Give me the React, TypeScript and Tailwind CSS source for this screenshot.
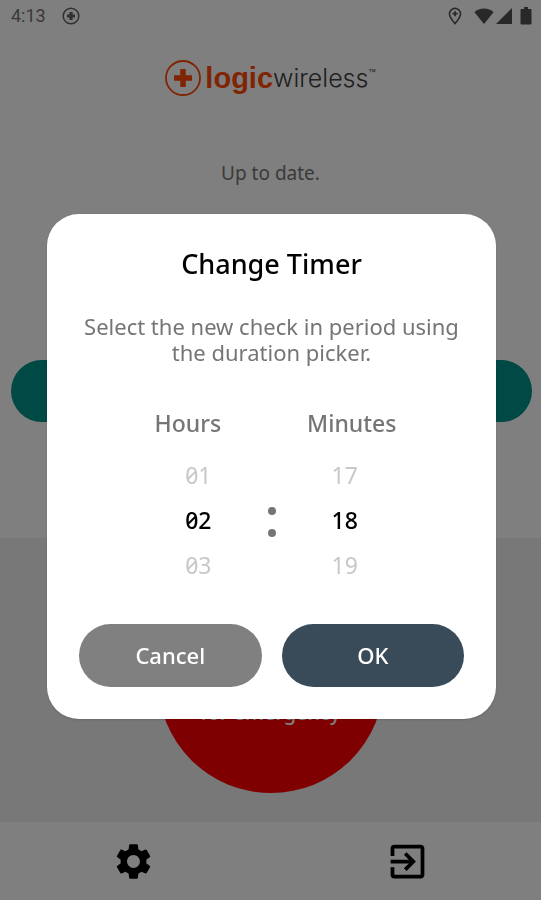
import { useState } from "react";
import { MdExitToApp, MdSettings } from "react-icons/md";

const pad = (n: number) => String(n).padStart(2, "0");

function StatusBar() {
  return (
    <div className="flex h-8 items-center justify-between pr-[9px] pl-[11px] text-[#757575]">
      <div className="flex items-center gap-4">
        <span className="font-['Roboto',sans-serif] text-[18px] leading-6">4:13</span>
        <svg viewBox="0 0 18 18" className="size-[18px]" fill="none" stroke="#606060" aria-hidden="true">
          <circle cx="9" cy="9" r="7.8" strokeWidth="1.5" />
          <path d="M9 5v8M5 9h8" strokeWidth="3.2" />
        </svg>
      </div>
      <div className="flex items-center text-[#505050]">
        <svg viewBox="0 0 14 18" className="mr-3 h-[18px] w-[14px]" fill="none" stroke="currentColor" aria-hidden="true">
          <path d="M7 16.6C4 12.800 1.500 10 1.500 6.900a5.500 5.500 0 0 1 11 0C12.500 10 10 12.800 7 16.600z" strokeWidth="1.6" />
          <path d="M7 4.200v5M4.500 6.700h5" strokeWidth="1.700" />
        </svg>
        <svg viewBox="0 0 20 16" className="h-4 w-5" fill="currentColor" aria-hidden="true">
          <path d="M10 16 .500 4.200C3 1.800 6.300.500 10 .500s7 1.300 9.500 3.700z" />
        </svg>
        <svg viewBox="0 0 16 16" className="ml-[2px] size-4" fill="currentColor" aria-hidden="true">
          <path d="M16 0v16H0z" />
        </svg>
        <svg viewBox="0 0 12 18" className="ml-2 h-[18px] w-3" fill="currentColor" aria-hidden="true">
          <path d="M4 0h4v2h2.500q1 0 1 1v13.500q0 1-1 1h-9q-1 0-1-1V3q0-1 1-1H4z" />
        </svg>
      </div>
    </div>
  );
}

function Logo() {
  return (
    <div className="flex h-9 items-center justify-center text-[#ff4a08]">
      <svg viewBox="0 0 36 36" className="mr-1 size-9" fill="none" stroke="currentColor" aria-hidden="true">
        <circle cx="18" cy="18" r="17" strokeWidth="1.800" />
        <path d="M18 9v18M9 18h18" strokeWidth="5.500" />
      </svg>
      <span className="font-['Liberation_Sans',sans-serif] text-[29px] leading-9 font-bold">logic</span>
      <span className="font-['Inter',sans-serif] text-[25px] leading-9 font-light text-[#404040]">wireless</span>
      <span className="self-start pt-[6px] font-['Inter',sans-serif] text-[12px] leading-4 font-light text-[#404040]">™</span>
    </div>
  );
}

type WheelProps = {
  label: string;
  value: number;
  count: number;
  onChange: (value: number) => void;
};

function Wheel({ label, value, count, onChange }: WheelProps) {
  const previous = (value + count - 1) % count;
  const next = (value + 1) % count;
  return (
    <div role="group" aria-label={label} className="flex flex-col items-end text-[23px] leading-[45px] slashed-zero">
      <button type="button" onClick={() => onChange(previous)} className="text-[#c8c8c8]">
        {pad(previous)}
      </button>
      <output className="font-medium text-black">{pad(value)}</output>
      <button type="button" onClick={() => onChange(next)} className="text-[#c8c8c8]">
        {pad(next)}
      </button>
    </div>
  );
}

export default function App() {
  const [hours, setHours] = useState(2);
  const [minutes, setMinutes] = useState(18);

  return (
    <div className="font-['Noto_Sans',sans-serif]">
      <div className="flex min-h-screen flex-col bg-white">
        <StatusBar />
        <header className="pt-7">
          <Logo />
        </header>
        <main className="flex grow flex-col">
          <p className="pt-16 text-center text-[19px] leading-[26px] text-[#757575]">Up to date.</p>
          <div className="pt-[174px] pr-[9px] pb-[116px] pl-[11px]">
            <button type="button" aria-label="Check in" className="block h-[62px] w-full rounded-full bg-[#00928a]" />
          </div>
          <section className="flex grow items-center justify-center bg-[#f0f0f0]">
            <button
              type="button"
              className="flex size-[226px] items-end justify-center rounded-full bg-[#ff0000] pb-[67px] text-[20px] leading-[26px] font-medium text-white"
            >
              for emergency
            </button>
          </section>
        </main>
        <nav className="grid h-[78px] grid-cols-2 place-items-center gap-2 bg-white text-black">
          <button type="button" aria-label="Settings">
            <MdSettings className="size-[43px]" />
          </button>
          <button type="button" aria-label="Exit">
            <MdExitToApp className="size-[45px]" />
          </button>
        </nav>
      </div>

      <div className="fixed inset-0 flex items-center justify-center bg-black/50 pt-8 pr-[45px] pl-[47px]">
        <div
          role="dialog"
          aria-modal="true"
          aria-labelledby="dialog-title"
          className="w-full rounded-[32px] bg-white p-8 text-center shadow-sm"
        >
          <h1 id="dialog-title" className="text-[27px] leading-9 font-medium text-black">
            Change Timer
          </h1>
          <p className="pt-[31px] text-[22px] leading-[26px] text-[#757575]">
            Select the new check in period using the duration picker.
          </p>
          <div className="flex justify-center gap-[86px] pt-10 pl-2 text-[23px] leading-9 font-medium text-[#757575]">
            <span>Hours</span>
            <span>Minutes</span>
          </div>
          <div className="flex items-center justify-center gap-14 pt-3">
            <Wheel label="Hours" value={hours} count={24} onChange={setHours} />
            <div className="flex flex-col gap-[14px] pt-1">
              <span className="size-2 rounded-full bg-[#757575]" />
              <span className="size-2 rounded-full bg-[#757575]" />
            </div>
            <Wheel label="Minutes" value={minutes} count={60} onChange={setMinutes} />
          </div>
          <div className="grid grid-cols-2 gap-5 pt-9 text-[22px] font-medium text-white">
            <button type="button" className="h-[63px] rounded-full bg-[#808080]">
              Cancel
            </button>
            <button type="button" className="h-[63px] rounded-full bg-[#394b59]">
              OK
            </button>
          </div>
        </div>
      </div>
    </div>
  );
}
